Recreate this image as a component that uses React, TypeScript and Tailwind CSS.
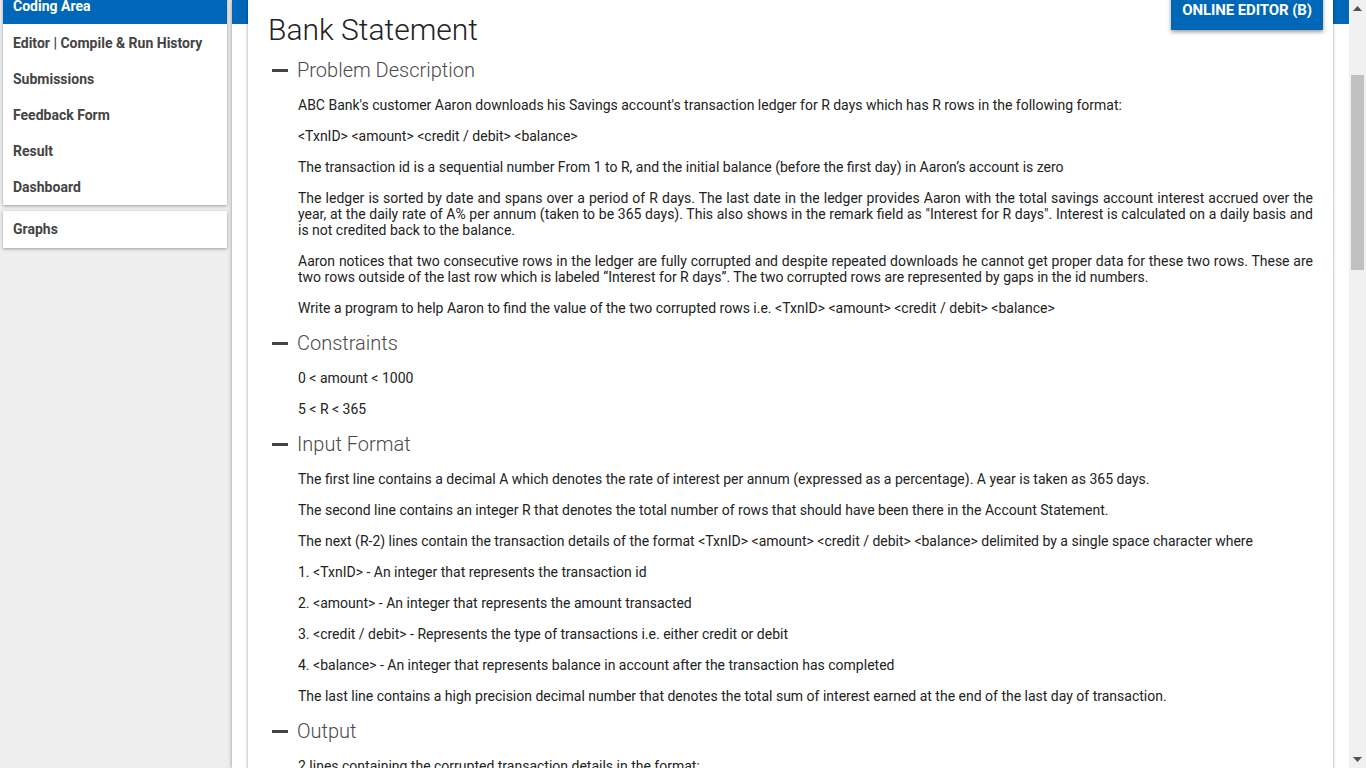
import React from "react";

const navItems = ["Editor | Compile & Run History", "Submissions", "Feedback Form", "Result", "Dashboard"];

const Section: React.FC<{ title: string; children: React.ReactNode }> = ({ title, children }) => {
  return (
    <div>
      <div className="flex items-center h-[24px] mb-[15px]">
        <span className="block w-[16px] h-[3px] bg-[#444] ml-[4px] mr-[9px]"></span>
        <span className="text-[20px] leading-[24px] font-light text-[#4a4a4a]">{title}</span>
      </div>
      <div className="pl-[30px]">{children}</div>
    </div>
  );
};

const P: React.FC<{ children: React.ReactNode }> = ({ children }) => (
  <p className="text-[14px] leading-[16px] text-[#222] text-justify mb-[15px]">{children}</p>
);

// fake window scrollbar, the page itself is clipped to the viewport
const ScrollBar: React.FC = () => (
  <div className="w-[17px] shrink-0 bg-[#f1f1f1] flex flex-col items-center">
    <div className="h-[17px] flex items-center justify-center">
      <svg width="9" height="5" viewBox="0 0 9 5">
        <path d="M0 5 L4.5 0 L9 5 Z" fill="#505050" />
      </svg>
    </div>
    <div className="w-[13px] mt-[58px] h-[195px] bg-[#c1c1c1]"></div>
    <div className="flex-1"></div>
    <div className="h-[17px] flex items-center justify-center">
      <svg width="9" height="5" viewBox="0 0 9 5">
        <path d="M0 0 L9 0 L4.5 5 Z" fill="#505050" />
      </svg>
    </div>
  </div>
);

const App: React.FC = () => {
  return (
    <div className="flex h-screen overflow-hidden font-['Roboto',sans-serif]">
      <div className="flex flex-1 min-w-0 overflow-hidden bg-[#eeeeee]">
        {/* sidebar */}
        <div className="w-[232px] shrink-0 pl-[3px] pr-[5px] -mt-[12px]">
          <div className="bg-white shadow-[0_1px_3px_rgba(0,0,0,0.35)]">
            <div className="h-[36px] bg-[#0067b8] text-white font-bold text-[14px] flex items-center px-[10px]">
              Coding Area
            </div>
            <div className="pt-[1px]">
              {navItems.map((item) => (
                <div key={item} className="h-[36px] flex items-center px-[10px] text-[14px] font-bold text-[#444]">
                  {item}
                </div>
              ))}
            </div>
          </div>
          <div className="bg-white mt-[6px] shadow-[0_1px_3px_rgba(0,0,0,0.35)] h-[37px] flex items-center px-[10px] text-[14px] font-bold text-[#444]">
            Graphs
          </div>
        </div>

        {/* main */}
        <div className="flex-1 min-w-0 bg-white shadow-[0_0_4px_rgba(0,0,0,0.4)]">
          <div className="h-[24px] bg-[#0067b8]"></div>
          <div className="relative -mt-[24px] mx-[16px] bg-white shadow-[0_0_3px_rgba(0,0,0,0.4)] pl-[20px] pr-[20px] pt-[12px] pb-[40px] min-h-[2880px]">
            <button className="absolute right-[10px] -top-[6px] h-[36px] px-[11px] pb-[4px] bg-[#0067b8] text-white font-bold text-[15px] tracking-[-0.1px] shadow-[0_2px_4px_rgba(0,0,0,0.4)] flex items-center">
              ONLINE EDITOR (B)
            </button>
            <h1 className="text-[30px] leading-[36px] text-[#222] font-light mb-[10px]">Bank Statement</h1>

            <Section title="Problem Description">
              <P>ABC Bank's customer Aaron downloads his Savings account's transaction ledger for R days which has R rows in the following format:</P>
              <P>&lt;TxnID&gt; &lt;amount&gt; &lt;credit / debit&gt; &lt;balance&gt;</P>
              <P>The transaction id is a sequential number From 1 to R, and the initial balance (before the first day) in Aaron’s account is zero</P>
              <P>
                The ledger is sorted by date and spans over a period of R days. The last date in the ledger provides Aaron with the total savings account interest accrued over the year, at the daily rate of A% per annum (taken to be 365 days). This also shows in the remark field as "Interest for R days". Interest is calculated on a daily basis and is not credited back to the balance.
              </P>
              <P>
                Aaron notices that two consecutive rows in the ledger are fully corrupted and despite repeated downloads he cannot get proper data for these two rows. These are two rows outside of the last row which is labeled “Interest for R days”. The two corrupted rows are represented by gaps in the id numbers.
              </P>
              <P>Write a program to help Aaron to find the value of the two corrupted rows i.e. &lt;TxnID&gt; &lt;amount&gt; &lt;credit / debit&gt; &lt;balance&gt;</P>
            </Section>

            <Section title="Constraints">
              <P>0 &lt; amount &lt; 1000</P>
              <P>5 &lt; R &lt; 365</P>
            </Section>

            <Section title="Input Format">
              <P>The first line contains a decimal A which denotes the rate of interest per annum (expressed as a percentage). A year is taken as 365 days.</P>
              <P>The second line contains an integer R that denotes the total number of rows that should have been there in the Account Statement.</P>
              <P>The next (R-2) lines contain the transaction details of the format &lt;TxnID&gt; &lt;amount&gt; &lt;credit / debit&gt; &lt;balance&gt; delimited by a single space character where</P>
              <P>1. &lt;TxnID&gt; - An integer that represents the transaction id</P>
              <P>2. &lt;amount&gt; - An integer that represents the amount transacted</P>
              <P>3. &lt;credit / debit&gt; - Represents the type of transactions i.e. either credit or debit</P>
              <P>4. &lt;balance&gt; - An integer that represents balance in account after the transaction has completed</P>
              <P>The last line contains a high precision decimal number that denotes the total sum of interest earned at the end of the last day of transaction.</P>
            </Section>

            <Section title="Output">
              <P>2 lines containing the corrupted transaction details in the format:</P>
              <P>&lt;TxnID&gt; &lt;amount&gt; &lt;credit / debit&gt; &lt;balance&gt;</P>
            </Section>
          </div>
        </div>
      </div>
      <ScrollBar />
    </div>
  );
};

export default App;
